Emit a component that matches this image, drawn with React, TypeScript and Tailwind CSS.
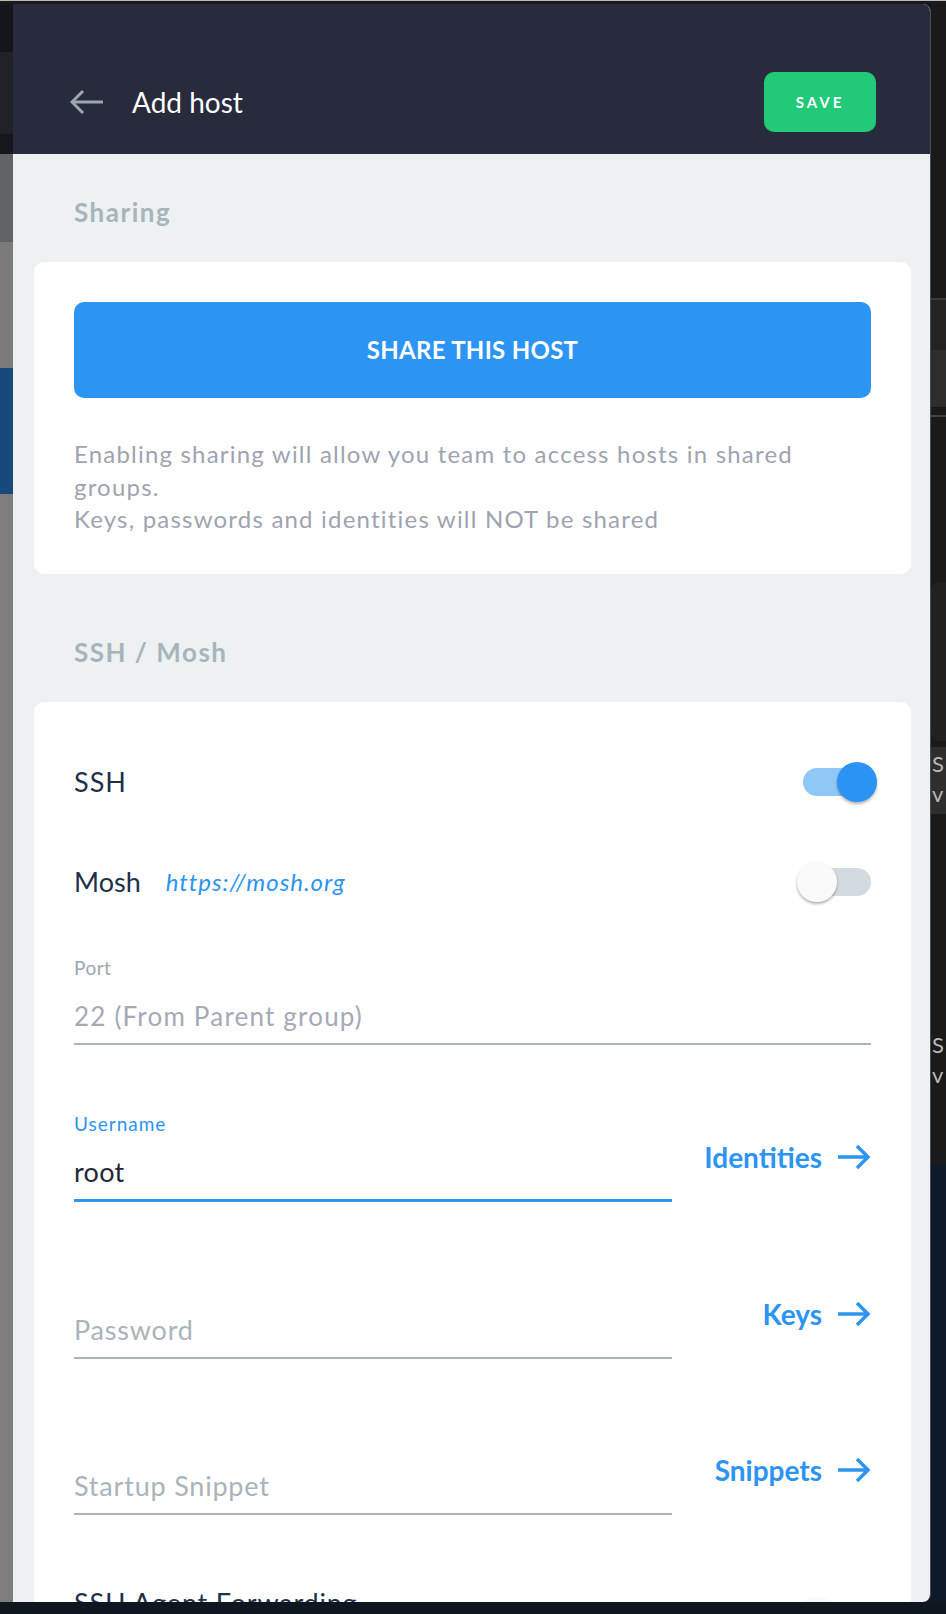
import React from "react";

function BackArrow() {
  return (
    <svg width="34" height="26" viewBox="0 0 34 26" fill="none" className="shrink-0">
      <path d="M2 13H33" stroke="#9ba7b1" strokeWidth="3" />
      <path d="M13 2L2 13L13 24" stroke="#9ba7b1" strokeWidth="3" strokeLinejoin="miter" />
    </svg>
  );
}

function LinkArrow() {
  return (
    <svg width="33" height="26" viewBox="0 0 33 26" fill="none" className="shrink-0">
      <path d="M0 13H30" stroke="#2c94f2" strokeWidth="3.5" />
      <path d="M19 2L30 13L19 24" stroke="#2c94f2" strokeWidth="3.5" strokeLinejoin="miter" />
    </svg>
  );
}

function Toggle({ on }: { on: boolean }) {
  return (
    <div className="relative -mr-[6px] h-[40px] w-[80px] shrink-0">
      <div
        className={
          on
            ? "absolute left-[6px] top-[6px] h-[28px] w-[68px] rounded-full bg-[#91c7f7]"
            : "absolute left-[6px] top-[6px] h-[28px] w-[68px] rounded-full bg-[#d4dbe0]"
        }
      />
      <div
        className={
          on
            ? "absolute left-[40px] top-0 h-[40px] w-[40px] rounded-full bg-[#2b93f3] shadow-[0_2px_3px_rgba(0,0,0,0.3)]"
            : "absolute left-0 top-0 h-[40px] w-[40px] rounded-full bg-[#fafafa] shadow-[0_2px_3px_rgba(0,0,0,0.3)]"
        }
      />
    </div>
  );
}

function Field({
  label,
  value,
  placeholder,
  focused,
  full,
}: {
  label?: string;
  value?: string;
  placeholder?: string;
  focused?: boolean;
  full?: boolean;
}) {
  return (
    <div
      className={
        (full ? "w-full " : "w-[598px] ") +
        (focused ? "border-b-[3px] border-[#2c94f2] pb-[9px]" : "border-b-2 border-[#aab5bc] pb-[9px]")
      }
    >
      <div
        className={
          focused
            ? "h-[24px] text-[19px] leading-[24px] tracking-[1px] text-[#2c94f2]"
            : "h-[24px] text-[19px] leading-[24px] tracking-[0.5px] text-[#9da6ae]"
        }
      >
        {label}
      </div>
      <div className="mt-[18px] h-[36px]">
        {value ? (
          <span
            className={
              focused
                ? "text-[27px] leading-[36px] tracking-[0.3px] text-[#232735]"
                : "text-[26px] leading-[36px] tracking-[1.2px] text-[#a5a9b5]"
            }
          >
            {value}
          </span>
        ) : (
          <span className="text-[27px] leading-[36px] tracking-[0.8px] text-[#aab3ba]">{placeholder}</span>
        )}
      </div>
    </div>
  );
}

function SideLink({ text }: { text: string }) {
  return (
    <div className="flex items-center gap-[16px]">
      <span className="text-[28px] font-bold leading-[36px] text-[#2c94f2]">{text}</span>
      <LinkArrow />
    </div>
  );
}

function LeftStrip() {
  return (
    <div className="flex w-[13px] shrink-0 flex-col">
      <div className="h-[48px] bg-[#15161d]" />
      <div className="h-[82px] bg-[#1f2228]" />
      <div className="h-[20px] bg-[#15171d]" />
      <div className="h-[88px] bg-[#606467]" />
      <div className="h-[126px] bg-[#7b7b7b]" />
      <div className="h-[126px] bg-[#174a7b]" />
      <div className="flex-1 bg-[#7d7d7d]" />
    </div>
  );
}

function RightStrip() {
  return (
    <div className="flex flex-1 flex-col overflow-hidden bg-[#1a1a1a] text-[22px] leading-[30px] text-[#b8b8b8]">
      <div className="h-[294px]" />
      <div className="h-[2px] bg-[#3a3a3a]" />
      <div className="h-[50px] bg-[#232323]" />
      <div className="h-[57px] bg-[#2d2d2d]" />
      <div className="h-[8px]" />
      <div className="h-[2px] bg-[#444444]" />
      <div className="h-[165px]" />
      <div className="h-[159px] rounded-l-[8px] bg-[#212121]" />
      <div className="h-[6px]" />
      <div className="h-[67px] bg-[#2e2e2e] pl-px pt-[2px]">
        <div>S</div>
        <div>v</div>
      </div>
      <div className="h-[216px]" />
      <div className="h-[51px] pl-px">
        <div>S</div>
        <div>v</div>
      </div>
      <div className="h-[83px]" />
      <div className="flex-1 bg-[#0f1a28]" />
    </div>
  );
}

export default function App() {
  return (
    <div className="flex h-[1614px] w-[946px] flex-col overflow-hidden bg-[#0e1620] font-['Lato',sans-serif]">
      <div className="h-px bg-[#b9b9b9]" />
      <div className="h-[3px] bg-[#1a1a1a]" />
      <div className="flex h-[1598px]">
        <LeftStrip />
        <div className="flex w-[918px] shrink-0 flex-col overflow-hidden rounded-r-[8px] border-r border-[#4a4d56] bg-[#edf1f2]">
          <header className="flex h-[150px] shrink-0 items-center justify-between bg-[#282b3b] pb-[22px] pl-[57px] pr-[54px] pt-[68px]">
            <div className="flex items-center gap-[28px]">
              <BackArrow />
              <span className="text-[28px] leading-[36px] text-white">Add host</span>
            </div>
            <button className="h-[60px] w-[112px] rounded-[10px] bg-[#21c979] text-[15px] font-bold tracking-[3px] text-white">
              SAVE
            </button>
          </header>

          <div className="flex flex-col pl-[21px] pr-[19px]">
            <h2 className="mt-[40px] pl-[40px] text-[26px] font-bold leading-[36px] tracking-[1.5px] text-[#a8b4bb]">
              Sharing
            </h2>
            <section className="mt-[32px] rounded-[10px] bg-white px-[40px] pb-[38px] pt-[40px]">
              <button className="h-[96px] w-full rounded-[10px] bg-[#2c94f2] text-[24px] font-bold tracking-[0.3px] text-white">
                SHARE THIS HOST
              </button>
              <p className="mt-[40px] max-w-[770px] text-[24px] leading-[32.5px] tracking-[1.2px] text-[#9ea3b0]">
                Enabling sharing will allow you team to access hosts in shared groups.
                <br />
                Keys, passwords and identities will NOT be shared
              </p>
            </section>

            <h2 className="mt-[60px] pl-[40px] text-[26px] font-bold leading-[36px] tracking-[1.5px] text-[#a8b4bb]">
              SSH / Mosh
            </h2>
            <section className="mt-[32px] rounded-t-[10px] bg-white px-[40px] pb-[200px] pt-[60px]">
              <div className="flex h-[40px] items-center justify-between">
                <span className="text-[27px] leading-[36px] tracking-[1px] text-[#1d3149]">SSH</span>
                <Toggle on />
              </div>
              <div className="mt-[60px] flex h-[40px] items-center justify-between">
                <div className="flex items-center gap-[25px]">
                  <span className="text-[27px] leading-[36px] text-[#1d3149]">Mosh</span>
                  <span className="text-[24px] italic leading-[36px] tracking-[1px] text-[#2c94f2]">
                    https://mosh.org
                  </span>
                </div>
                <Toggle on={false} />
              </div>

              <div className="mt-[54px]">
                <Field full label="Port" value="22 (From Parent group)" />
              </div>

              <div className="mt-[67px] flex items-center justify-between">
                <Field label="Username" value="root" focused />
                <SideLink text="Identities" />
              </div>

              <div className="mt-[68px] flex items-center justify-between">
                <Field placeholder="Password" />
                <SideLink text="Keys" />
              </div>

              <div className="mt-[67px] flex items-center justify-between">
                <Field placeholder="Startup Snippet" />
                <SideLink text="Snippets" />
              </div>

              <div className="mt-[70px] flex items-start justify-between">
                <span className="text-[27px] leading-[36px] tracking-[0.8px] text-[#1d3149]">SSH Agent Forwarding</span>
                <div className="mt-[12px]">
                  <Toggle on={false} />
                </div>
              </div>
            </section>
          </div>
        </div>
        <RightStrip />
      </div>
      <div className="flex-1 bg-[#0e1620]" />
    </div>
  );
}
